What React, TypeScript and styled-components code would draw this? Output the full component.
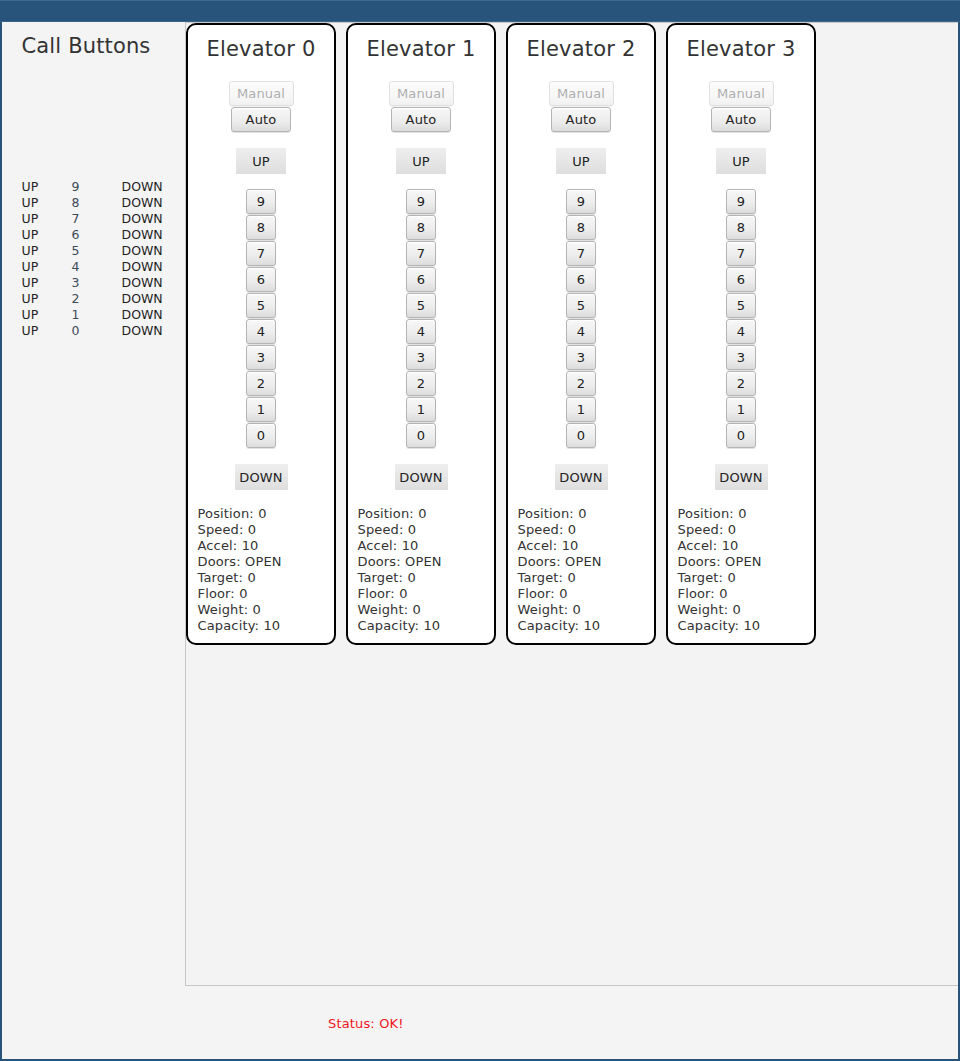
import React from "react";
import styled, { createGlobalStyle, css } from "styled-components";

const GlobalStyle = createGlobalStyle`
  html, body {
    margin: 0;
    padding: 0;
    background: #f4f4f4;
  }
  body {
    font-family: "DejaVu Sans", "Liberation Sans", sans-serif;
  }
`;

const Window = styled.div`
  width: 960px;
  height: 1061px;
  display: flex;
  flex-direction: column;
  background: #f4f4f4;
  overflow: hidden;
`;

const TitleBar = styled.div`
  height: 22px;
  flex: 0 0 22px;
  box-sizing: border-box;
  background: #28537a;
  border-top: 1px solid #3b6a93;
  border-bottom: 1px solid #3a6488;
`;

const Frame = styled.div`
  flex: 1;
  box-sizing: border-box;
  border: 2px solid #28537a;
  border-top: 0;
  display: grid;
  grid-template-columns: 183px 1fr;
  grid-template-rows: 964px 1fr;
`;

const LeftPanel = styled.div`
  padding: 11.5px 0 0 19.5px;
  display: flex;
  flex-direction: column;
`;

const PanelTitle = styled.div`
  font-size: 21px;
  line-height: 25px;
  letter-spacing: 0.15px;
  color: #333;
  white-space: nowrap;
`;

const CallList = styled.div`
  margin-top: 120px;
  display: grid;
  grid-template-columns: 50px 50px auto;
  font-size: 12.5px;
  line-height: 16px;
`;

const CallCell = styled.span<{ $dim?: boolean }>`
  color: ${(p) => (p.$dim ? "#3d4a57" : "#1f1f1f")};
`;

const CenterPanel = styled.div`
  box-sizing: border-box;
  border: 1px solid #c8c8c8;
  border-right: 0;
  background: #f3f3f3;
  display: flex;
  align-items: flex-start;
  gap: 10px;
`;

const Card = styled.div`
  width: 150px;
  box-sizing: border-box;
  border: 2px solid #000;
  border-radius: 10px;
  background: #fff;
  display: flex;
  flex-direction: column;
  align-items: center;
  padding: 12px 0 9.5px;
`;

const CardTitle = styled.div`
  font-size: 21px;
  line-height: 25px;
  letter-spacing: 0.2px;
  color: #333;
  white-space: nowrap;
`;

const ModeGroup = styled.div`
  margin-top: 19px;
  display: flex;
  flex-direction: column;
  align-items: center;
  gap: 1px;
`;

const Btn = styled.button<{ $w: number; $h?: number; $flat?: boolean }>`
  width: ${(p) => p.$w}px;
  height: ${(p) => p.$h ?? 25}px;
  box-sizing: border-box;
  padding: 0;
  margin: 0;
  font-family: "DejaVu Sans", "Liberation Sans", sans-serif;
  font-size: 13px;
  letter-spacing: 0.15px;
  line-height: 1;
  color: #222;
  cursor: default;
  ${(p) =>
    p.$flat
      ? css`
          border: 0;
          border-radius: 0;
          background: linear-gradient(#eeeeee, #dedede);
        `
      : css`
          border: 1px solid #b4b4b4;
          border-radius: 3px;
          background: linear-gradient(#f8f8f8 0%, #ececec 60%, #dcdcdc 100%);
          box-shadow: inset 0 1px 0 #ffffff, 0 1px 0 #e2e2e2;
        `}
  &:disabled {
    opacity: 0.4;
    color: #333;
  }
`;

const DirWrap = styled.div<{ $mt: number }>`
  margin-top: ${(p) => p.$mt}px;
  display: flex;
  justify-content: center;
`;

const FloorStack = styled.div`
  margin-top: 15px;
  display: flex;
  flex-direction: column;
  gap: 1px;
`;

const Info = styled.div`
  align-self: stretch;
  margin-top: 15.5px;
  padding-left: 9.5px;
  font-size: 13px;
  line-height: 16px;
  letter-spacing: 0.15px;
  color: #333;
`;

const StatusArea = styled.div`
  grid-column: 1 / span 2;
  padding: 29.5px 0 0 326px;
`;

const StatusText = styled.div`
  font-size: 13px;
  line-height: 16px;
  letter-spacing: 0.15px;
  color: #f0161e;
`;

const floors = [9, 8, 7, 6, 5, 4, 3, 2, 1, 0];

const Elevator: React.FC<{ id: number }> = ({ id }) => (
  <Card>
    <CardTitle>Elevator {id}</CardTitle>
    <ModeGroup>
      <Btn $w={65} disabled>
        Manual
      </Btn>
      <Btn $w={60}>Auto</Btn>
    </ModeGroup>
    <DirWrap $mt={16}>
      <Btn $w={50} $h={26} $flat>
        UP
      </Btn>
    </DirWrap>
    <FloorStack>
      {floors.map((f) => (
        <Btn key={f} $w={30}>
          {f}
        </Btn>
      ))}
    </FloorStack>
    <DirWrap $mt={16}>
      <Btn $w={53} $h={26} $flat>
        DOWN
      </Btn>
    </DirWrap>
    <Info>
      <div>Position: 0</div>
      <div>Speed: 0</div>
      <div>Accel: 10</div>
      <div>Doors: OPEN</div>
      <div>Target: 0</div>
      <div>Floor: 0</div>
      <div>Weight: 0</div>
      <div>Capacity: 10</div>
    </Info>
  </Card>
);

export default function App() {
  return (
    <>
      <GlobalStyle />
      <Window>
        <TitleBar />
        <Frame>
          <LeftPanel>
            <PanelTitle>Call Buttons</PanelTitle>
            <CallList>
              {floors.map((f) => (
                <React.Fragment key={f}>
                  <CallCell>UP</CallCell>
                  <CallCell $dim>{f}</CallCell>
                  <CallCell>DOWN</CallCell>
                </React.Fragment>
              ))}
            </CallList>
          </LeftPanel>
          <CenterPanel>
            {[0, 1, 2, 3].map((i) => (
              <Elevator key={i} id={i} />
            ))}
          </CenterPanel>
          <StatusArea>
            <StatusText>Status: OK!</StatusText>
          </StatusArea>
        </Frame>
      </Window>
    </>
  );
}
